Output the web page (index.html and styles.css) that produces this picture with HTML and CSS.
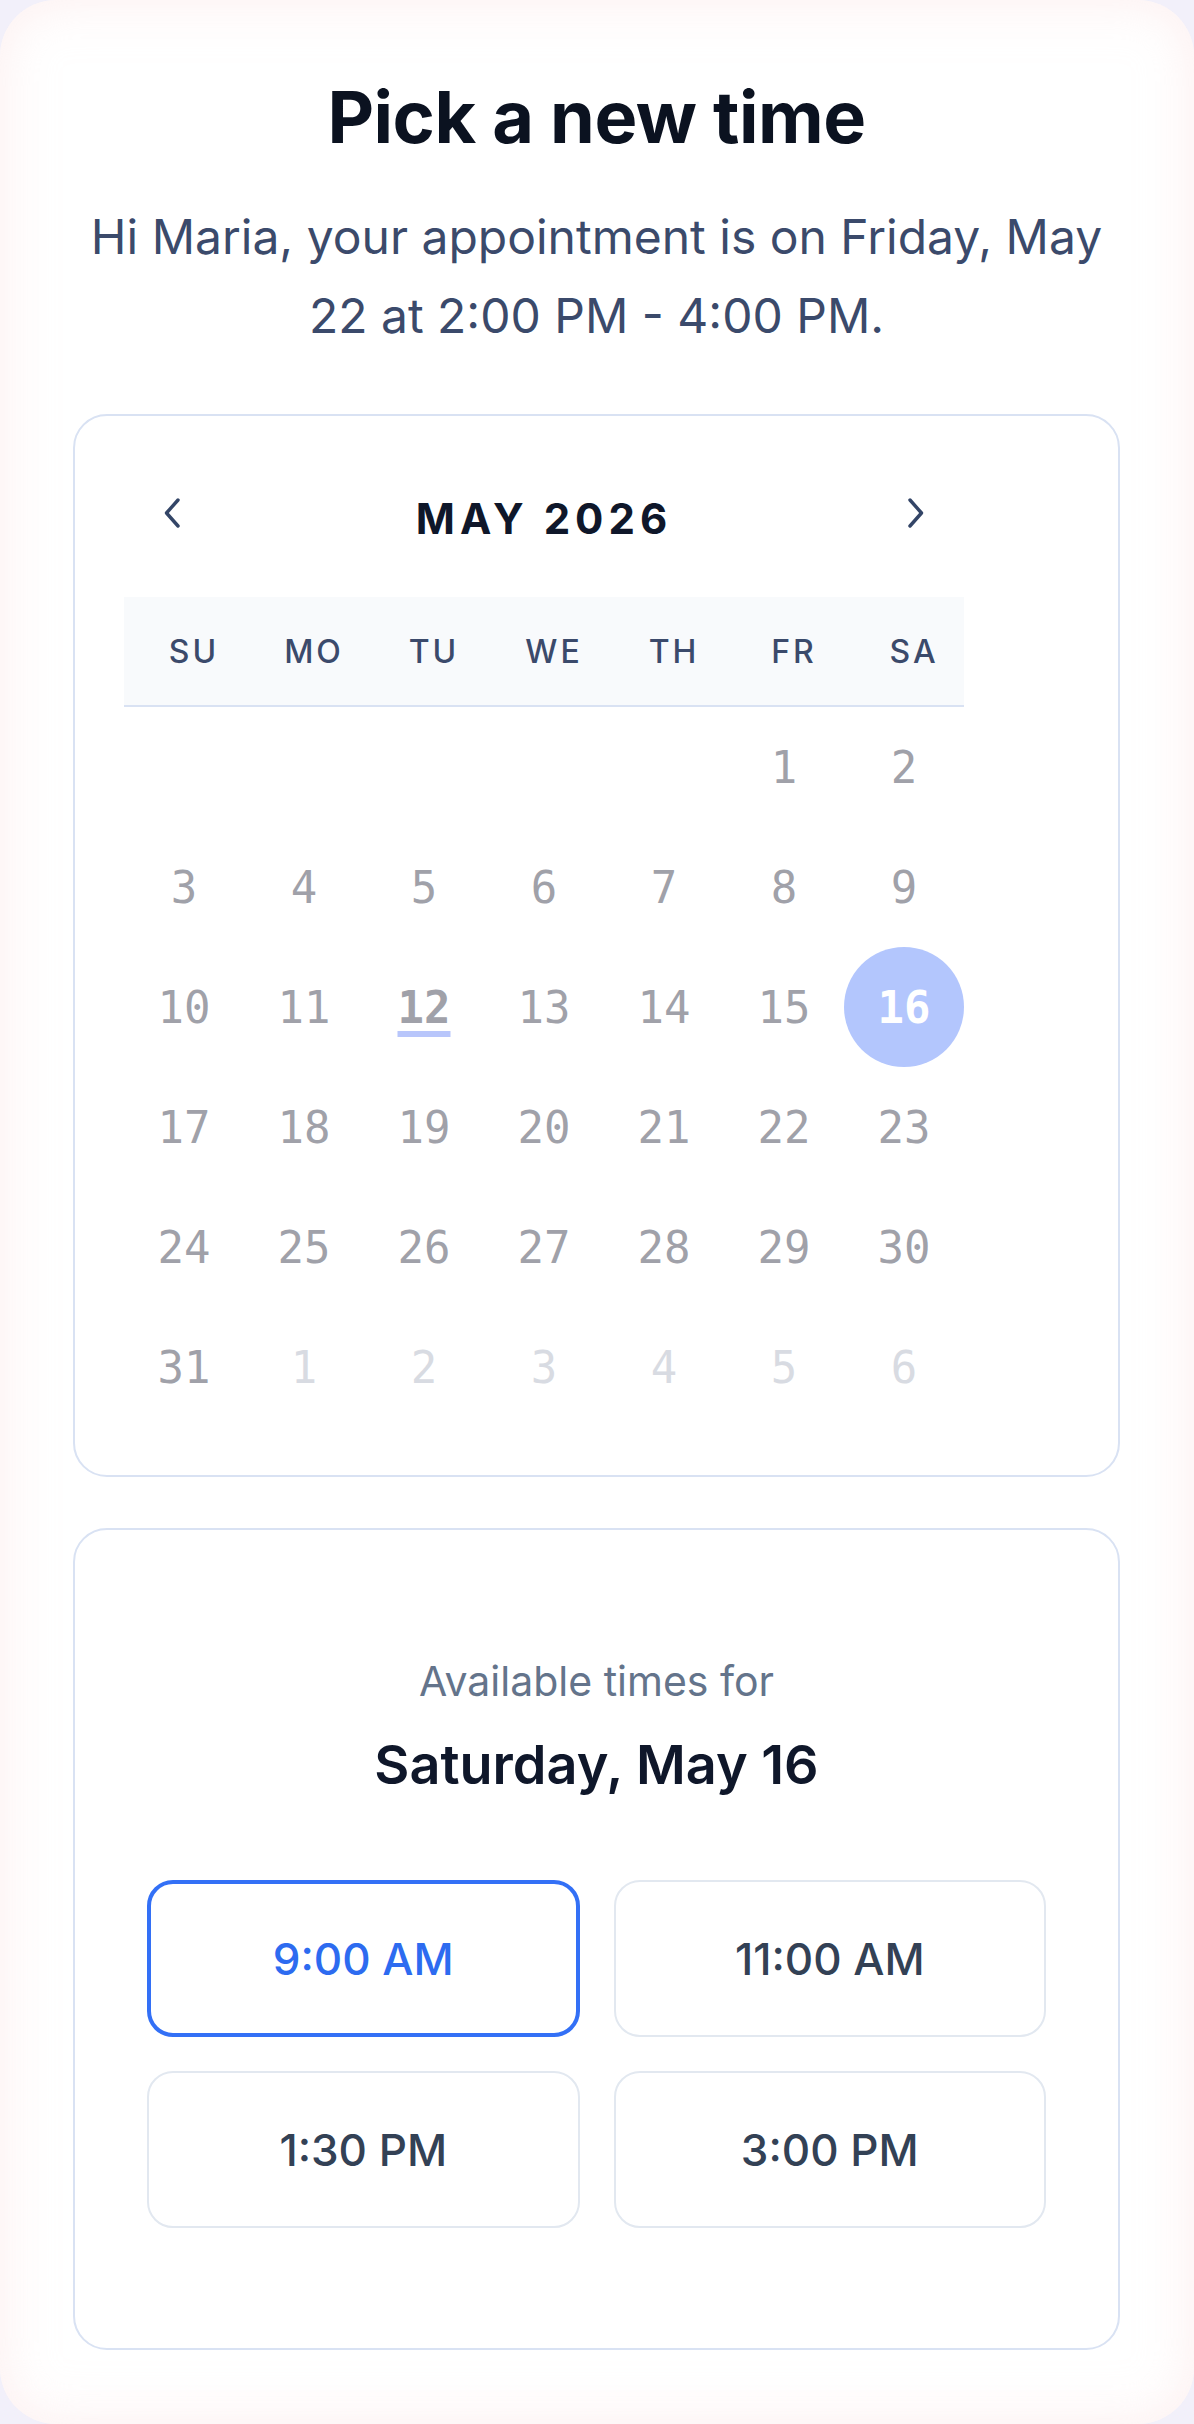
FILE: index.html
```html
<!DOCTYPE html>
<html lang="en">
<head>
<meta charset="utf-8">
<title>Pick a new time</title>
<link rel="stylesheet" href="styles.css">
</head>
<body>
<main class="sheet">
  <h1 class="title">Pick a new time</h1>
  <p class="sub">Hi Maria, your appointment is on Friday, May 22 at 2:00 PM - 4:00 PM.</p>

  <section class="calendar">
    <div class="nav">
      <button class="nav-btn" aria-label="Previous month">
        <svg width="18" height="30" viewBox="0 0 18 30"><path d="M15 2 L3.5 15 L15 28" fill="none" stroke="#334567" stroke-width="3.4" stroke-linecap="round" stroke-linejoin="round"/></svg>
      </button>
      <div class="month">MAY 2026</div>
      <button class="nav-btn" aria-label="Next month">
        <svg width="18" height="30" viewBox="0 0 18 30"><path d="M3 2 L14.5 15 L3 28" fill="none" stroke="#334567" stroke-width="3.4" stroke-linecap="round" stroke-linejoin="round"/></svg>
      </button>
    </div>
    <div class="weekdays">
      <span>SU</span><span>MO</span><span>TU</span><span>WE</span><span>TH</span><span>FR</span><span>SA</span>
    </div>
    <div class="days">
      <span class="day"></span><span class="day"></span><span class="day"></span><span class="day"></span><span class="day"></span>
      <span class="day">1</span><span class="day">2</span>
      <span class="day">3</span><span class="day">4</span><span class="day">5</span><span class="day">6</span><span class="day">7</span><span class="day">8</span><span class="day">9</span>
      <span class="day">10</span><span class="day">11</span><span class="day today">12</span><span class="day">13</span><span class="day">14</span><span class="day">15</span><span class="day selected"><span class="dot">16</span></span>
      <span class="day">17</span><span class="day">18</span><span class="day">19</span><span class="day">20</span><span class="day">21</span><span class="day">22</span><span class="day">23</span>
      <span class="day">24</span><span class="day">25</span><span class="day">26</span><span class="day">27</span><span class="day">28</span><span class="day">29</span><span class="day">30</span>
      <span class="day">31</span><span class="day muted">1</span><span class="day muted">2</span><span class="day muted">3</span><span class="day muted">4</span><span class="day muted">5</span><span class="day muted">6</span>
    </div>
  </section>

  <section class="times">
    <p class="times-label">Available times for</p>
    <h2 class="times-date">Saturday, May 16</h2>
    <div class="slots">
      <button class="slot active">9:00 AM</button>
      <button class="slot">11:00 AM</button>
      <button class="slot">1:30 PM</button>
      <button class="slot">3:00 PM</button>
    </div>
  </section>
</main>
</body>
</html>
```

FILE: styles.css
```css
html, body {
  margin: 0;
  padding: 0;
}

body {
  background: #f2f0fa;
  font-family: Inter, "Noto Sans", "Liberation Sans", sans-serif;
}

.sheet {
  box-sizing: border-box;
  min-height: 2424px;
  background: #ffffff;
  border-radius: 56px;
  box-shadow: inset 0 0 46px 8px rgba(252, 232, 232, 0.55);
  padding: 74px 74px 0 73px;
}

.title {
  margin: 0;
  font-size: 72px;
  line-height: 86px;
  font-weight: 700;
  color: #0b1220;
  text-align: center;
  letter-spacing: -0.5px;
}

.sub {
  margin: 37px 0 0;
  padding: 0 10px;
  font-size: 48px;
  line-height: 79px;
  font-weight: 400;
  color: #3b4a6b;
  text-align: center;
}

.calendar {
  margin-top: 59px;
  border: 2px solid #d9e2f3;
  border-radius: 34px;
  padding: 55px 0 48px 49px;
}

.nav {
  width: 840px;
  height: 84px;
  display: flex;
  align-items: center;
  justify-content: space-between;
}

.nav-btn {
  width: 96px;
  height: 84px;
  padding: 0;
  border: none;
  background: none;
  display: flex;
  align-items: center;
  justify-content: center;
}

.month {
  font-size: 42px;
  font-weight: 700;
  letter-spacing: 5px;
  padding: 10px 0 0 0;
  color: #0f172a;
}

.weekdays {
  margin-top: 42px;
  width: 840px;
  height: 108px;
  display: grid;
  grid-template-columns: repeat(7, 120px);
  align-items: center;
  background: #f8fafc;
  border-bottom: 2px solid #d9e2f3;
  font-size: 32px;
  font-weight: 500;
  letter-spacing: 3px;
  color: #3b4a6b;
  text-align: center;
}

.weekdays span {
  padding-left: 20px;
}

.days {
  display: grid;
  grid-template-columns: repeat(7, 120px);
  grid-auto-rows: 120px;
}

.day {
  display: flex;
  align-items: center;
  justify-content: center;
  font-family: "DejaVu Sans Mono", monospace;
  font-size: 44px;
  color: #a0a1a9;
}

.day.muted {
  color: #d8dbe2;
}

.day.today {
  font-weight: 700;
  text-decoration: underline;
  text-decoration-color: #b8c6fb;
  text-decoration-thickness: 6px;
  text-underline-offset: 8px;
}

.dot {
  width: 120px;
  height: 120px;
  border-radius: 50%;
  background: #b3c6fd;
  color: #ffffff;
  font-weight: 700;
  display: flex;
  align-items: center;
  justify-content: center;
}

.times {
  margin-top: 51px;
  border: 2px solid #d9e2f3;
  border-radius: 34px;
  padding: 128px 72px 120px;
  text-align: center;
}

.times-label {
  margin: 0;
  font-size: 41px;
  line-height: 47px;
  color: #64748b;
}

.times-date {
  margin: 29px 0 0;
  font-size: 54px;
  line-height: 62px;
  font-weight: 600;
  color: #0f172a;
}

.slots {
  margin-top: 84px;
  display: grid;
  grid-template-columns: 1fr 1fr;
  gap: 34px;
}

.slot {
  box-sizing: border-box;
  height: 157px;
  border: 2px solid #e2e8f0;
  border-radius: 26px;
  background: #ffffff;
  font-family: Inter, "Noto Sans", sans-serif;
  font-size: 44px;
  font-weight: 500;
  color: #334155;
}

.slot.active {
  border: 4px solid #3370f6;
  color: #2d6bf0;
}
```
